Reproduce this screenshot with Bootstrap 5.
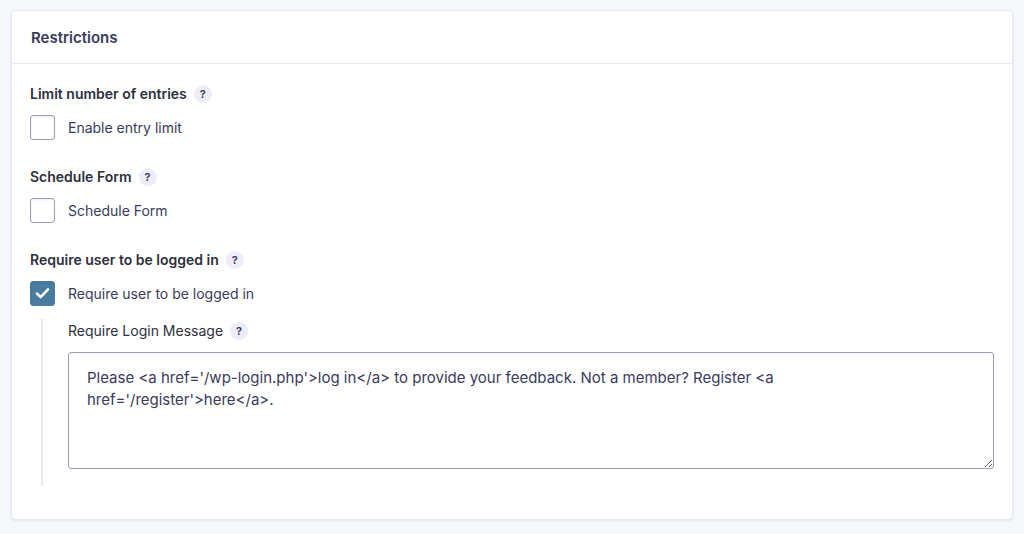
<!DOCTYPE html>
<html lang="en">
<head>
<meta charset="utf-8">
<meta name="viewport" content="width=device-width, initial-scale=1">
<title>Restrictions</title>
<link rel="stylesheet" href="https://cdn.jsdelivr.net/npm/bootstrap@5.3.0/dist/css/bootstrap.min.css">
<style>
body{background:#f6f8fc;color:#3a3b5c;font-family:Inter,"Liberation Sans",sans-serif;font-size:14px;line-height:22px}
.panel{border:1px solid #e6e8f0;border-radius:4px;box-shadow:0 1px 3px rgba(18,25,97,.08);margin:10px 11px 14px}
.panel-head{padding:16px 19px 14px;border-bottom:1px solid #e6e8f0}
.panel-head h1{font-size:15px;line-height:22px;font-weight:600}
.panel-content{padding:19px 18px 33px}
.setting{margin-bottom:26px}
.setting:last-child{margin-bottom:0}
.heading{gap:7px;font-size:14px;line-height:22px;color:#2d2f3c;margin-bottom:10px}
legend.heading{font-weight:600}
.help{width:18px;height:18px;border:0;border-radius:50%;background:#ecedf8;color:#33355a;font-size:11px;font-weight:600;line-height:18px;padding:0}
.choice{gap:13px}
.form-check-input.tick{width:25px;height:25px;margin:0;border:1px solid #9a9cbd;border-radius:3px;flex:none;box-shadow:inset 0 1px 2px rgba(18,25,97,.08)}
.form-check-input.tick:checked{background-color:#4a7ba1;border-color:#4a7ba1;background-image:url("data:image/svg+xml,%3Csvg xmlns='http://www.w3.org/2000/svg' viewBox='0 0 25 25'%3E%3Cpath d='M6.5 12.5l4 4 8-8.5' fill='none' stroke='white' stroke-width='2.7' stroke-linecap='round' stroke-linejoin='round'/%3E%3C/svg%3E")}
.nested{margin:13px 0 0 11px;padding:1px 0 17px 25px;border-left:2px solid #e8e8f2}
.form-control.message{font-size:15px;line-height:22px;height:117px;padding:14px 36px 14px 18px;border:1px solid #9a9cbd;border-radius:3px;color:#3a3b5c;resize:vertical}
</style>
</head>
<body>
<main class="panel bg-white">
<header class="panel-head"><h1 class="m-0">Restrictions</h1></header>
<form class="panel-content">
<fieldset class="setting">
<legend class="heading d-flex align-items-center">Limit number of entries <button type="button" class="help" aria-label="About the entry limit">?</button></legend>
<div class="choice d-flex align-items-center"><input class="form-check-input tick" type="checkbox" id="limit"><label for="limit">Enable entry limit</label></div>
</fieldset>
<fieldset class="setting">
<legend class="heading d-flex align-items-center">Schedule Form <button type="button" class="help" aria-label="About scheduling">?</button></legend>
<div class="choice d-flex align-items-center"><input class="form-check-input tick" type="checkbox" id="schedule"><label for="schedule">Schedule Form</label></div>
</fieldset>
<fieldset class="setting">
<legend class="heading d-flex align-items-center">Require user to be logged in <button type="button" class="help" aria-label="About requiring login">?</button></legend>
<div class="choice d-flex align-items-center"><input class="form-check-input tick" type="checkbox" id="login" checked><label for="login">Require user to be logged in</label></div>
<div class="nested">
<div class="heading d-flex align-items-center"><label for="message">Require Login Message</label> <button type="button" class="help" aria-label="About the login message">?</button></div>
<textarea class="form-control message" id="message">Please &lt;a href='/wp-login.php'&gt;log in&lt;/a&gt; to provide your feedback. Not a member? Register &lt;a href='/register'&gt;here&lt;/a&gt;.</textarea>
</div>
</fieldset>
</form>
</main>
<script src="https://cdn.jsdelivr.net/npm/bootstrap@5.3.0/dist/js/bootstrap.bundle.min.js"></script>
</body>
</html>
